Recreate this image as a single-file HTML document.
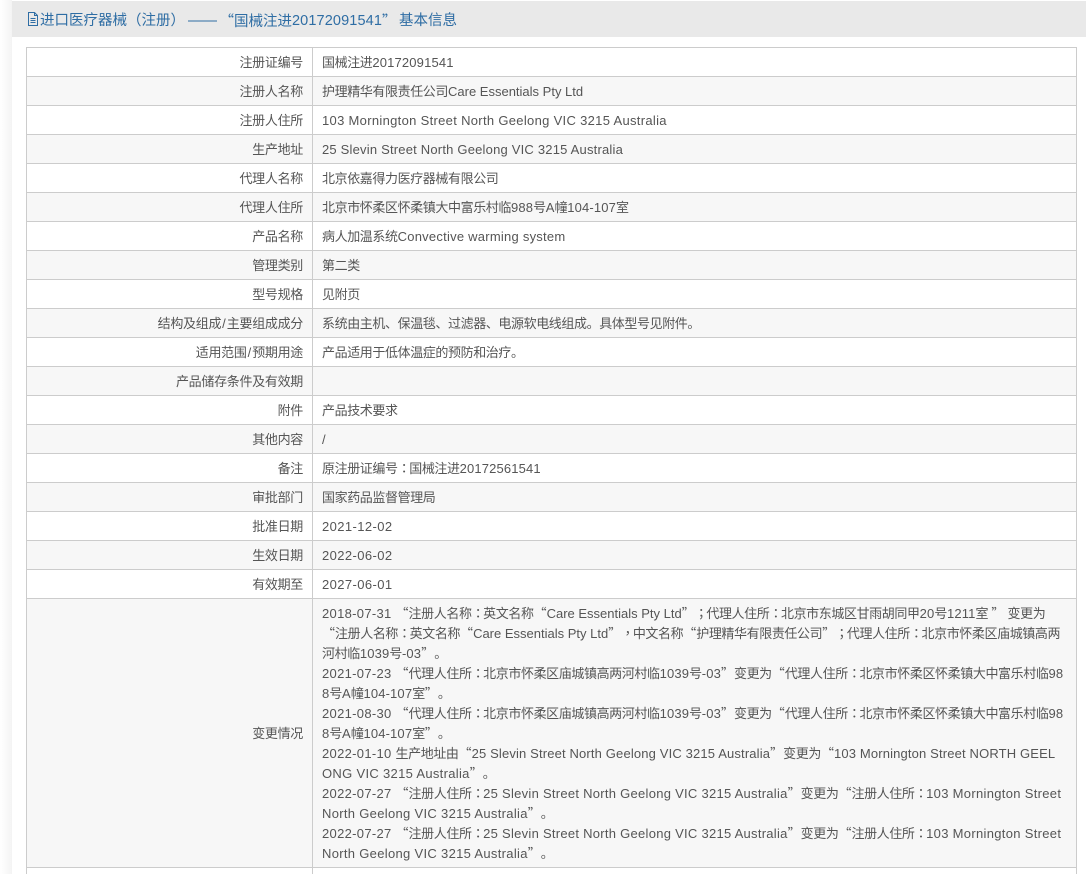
<!DOCTYPE html>
<html>
<head>
<meta charset="utf-8">
<style>
html,body{margin:0;padding:0;background:#fff;width:1086px;height:874px;overflow:hidden;}
#wrap{position:absolute;left:0;top:0;width:1086px;height:874px;overflow:hidden;font-family:"Liberation Sans","Noto Sans CJK SC",sans-serif;font-size:13px;color:#555;text-spacing-trim:space-all;}
#shadow{position:absolute;left:0;top:0;width:12px;height:874px;background:linear-gradient(to right,#fff,#f4f4f4);}
#head{position:absolute;left:12px;top:1px;width:1074px;height:36px;background:#e9e9e9;}
#head svg{position:absolute;left:15px;top:11px;}
.h{position:absolute;top:10px;font-size:14.5px;line-height:20px;color:#2e6da4;white-space:nowrap;font-family:"Liberation Sans","Noto Sans CJK SC",sans-serif;}
.s{font-family:"Noto Sans CJK SC",sans-serif;}
table{position:absolute;left:26px;top:47px;width:1051px;border-collapse:collapse;table-layout:fixed;}
td{border:1px solid #ccc;padding:1px 9px 0;height:27px;line-height:20px;white-space:nowrap;overflow:hidden;box-sizing:content-box;letter-spacing:-.4px;}
td:first-child{text-align:right;width:267px;letter-spacing:-.3px;}
tr:nth-child(even) td{background:#f7f7f7;}
tr.long td{height:267px;}
b{font-weight:normal;letter-spacing:.31px;}
b.n{letter-spacing:.2px;}
b.m{letter-spacing:.27px;}
b.k{letter-spacing:.15px;}
b.c{letter-spacing:0;}
u{text-decoration:none;letter-spacing:.15px;}
u.l{letter-spacing:0;margin:0 1px;}
i{font-style:normal;font-family:"Noto Sans CJK TC",sans-serif;letter-spacing:-1.4px;line-height:0;}
em{font-style:normal;font-family:"Noto Sans CJK SC",sans-serif;letter-spacing:0;line-height:0;}
</style>
</head>
<body>
<div id="wrap">
<div id="shadow"></div>
<div id="head">
<svg width="12" height="14" viewBox="0 0 12 14" fill="none" stroke="#2e6da4" stroke-width="1"><path d="M1.5 .5H7.5L10.5 3.5V13.5H1.5Z M7.5 .5V3.5H10.5 M3.5 6.5H8.5 M3.5 8.5H8.5 M3.5 10.5H8.5"/></svg>
<span class="h" style="left:28px">进口医疗器械</span>
<span class="h" style="left:115px">（注册）</span>
<span class="h" style="left:176px">——</span>
<span class="h s" style="left:207.5px">“国械注进</span>
<span class="h" style="left:280px;letter-spacing:.12px">20172091541</span>
<span class="h s" style="left:370px">”</span>
<span class="h" style="left:387px">基本信息</span>
</div>
<table>
<tr><td>注册证编号</td><td>国械注进<u>20172091541</u></td></tr>
<tr><td>注册人名称</td><td>护理精华有限责任公司<b class="c">Care Essentials Pty Ltd</b></td></tr>
<tr><td>注册人住所</td><td><b>103 Mornington Street North Geelong VIC 3215 Australia</b></td></tr>
<tr><td>生产地址</td><td><b class="n">25 Slevin Street North Geelong VIC 3215 Australia</b></td></tr>
<tr><td>代理人名称</td><td>北京依嘉得力医疗器械有限公司</td></tr>
<tr><td>代理人住所</td><td>北京市怀柔区怀柔镇大中富乐村临<u>988</u>号<u>A</u>幢<u>104-107</u>室</td></tr>
<tr><td>产品名称</td><td>病人加温系统<b style="letter-spacing:.24px">Convective warming system</b></td></tr>
<tr><td>管理类别</td><td>第二类</td></tr>
<tr><td>型号规格</td><td>见附页</td></tr>
<tr><td>结构及组成<u class="l">/</u>主要组成成分</td><td>系统由主机、保温毯、过滤器、电源软电线组成。具体型号见附件。</td></tr>
<tr><td>适用范围<u class="l">/</u>预期用途</td><td>产品适用于低体温症的预防和治疗。</td></tr>
<tr><td>产品储存条件及有效期</td><td></td></tr>
<tr><td>附件</td><td>产品技术要求</td></tr>
<tr><td>其他内容</td><td><u>/</u></td></tr>
<tr><td>备注</td><td>原注册证编号<i>：</i>国械注进<u>20172561541</u></td></tr>
<tr><td>审批部门</td><td>国家药品监督管理局</td></tr>
<tr><td>批准日期</td><td><b style="letter-spacing:.4px">2021-12-02</b></td></tr>
<tr><td>生效日期</td><td><b style="letter-spacing:.4px">2022-06-02</b></td></tr>
<tr><td>有效期至</td><td><b style="letter-spacing:.4px">2027-06-01</b></td></tr>
<tr class="long"><td>变更情况</td><td><b>2018-07-31 </b><em>“</em>注册人名称<i>：</i>英文名称<em>“</em><b class="c">Care Essentials Pty Ltd</b><em>”</em><i>；</i>代理人住所<i>：</i>北京市东城区甘雨胡同甲<u>20</u>号<u>1211</u>室 <em>”</em> 变更为<br><em>“</em>注册人名称<i>：</i>英文名称<em>“</em><b class="c">Care Essentials Pty Ltd</b><em>”</em><i>，</i>中文名称<em>“</em>护理精华有限责任公司<em>”</em><i>；</i>代理人住所<i>：</i>北京市怀柔区庙城镇高两<br>河村临<u>1039</u>号<u>-03</u><em>”</em>。<br><b>2021-07-23 </b><em>“</em>代理人住所<i>：</i>北京市怀柔区庙城镇高两河村临<u>1039</u>号<u>-03</u><em>”</em>变更为<em>“</em>代理人住所<i>：</i>北京市怀柔区怀柔镇大中富乐村临<u>98</u><br><u>8</u>号<u>A</u>幢<u>104-107</u>室<em>”</em>。<br><b>2021-08-30 </b><em>“</em>代理人住所<i>：</i>北京市怀柔区庙城镇高两河村临<u>1039</u>号<u>-03</u><em>”</em>变更为<em>“</em>代理人住所<i>：</i>北京市怀柔区怀柔镇大中富乐村临<u>98</u><br><u>8</u>号<u>A</u>幢<u>104-107</u>室<em>”</em>。<br><b>2022-01-10 </b>生产地址由<em>“</em><b class="k">25 Slevin Street North Geelong VIC 3215 Australia</b><em>”</em>变更为<em>“</em><b class="k">103 Mornington Street NORTH GEEL</b><br><b>ONG VIC 3215 Australia</b><em>”</em>。<br><b>2022-07-27 </b><em>“</em>注册人住所<i>：</i><b class="m">25 Slevin Street North Geelong VIC 3215 Australia</b><em>”</em>变更为<em>“</em>注册人住所<i>：</i><b>103 Mornington Street</b><br><b>North Geelong VIC 3215 Australia</b><em>”</em>。<br><b>2022-07-27 </b><em>“</em>注册人住所<i>：</i><b class="m">25 Slevin Street North Geelong VIC 3215 Australia</b><em>”</em>变更为<em>“</em>注册人住所<i>：</i><b>103 Mornington Street</b><br><b>North Geelong VIC 3215 Australia</b><em>”</em>。</td></tr>
<tr><td></td><td></td></tr>
</table>
</div>
</body>
</html>
